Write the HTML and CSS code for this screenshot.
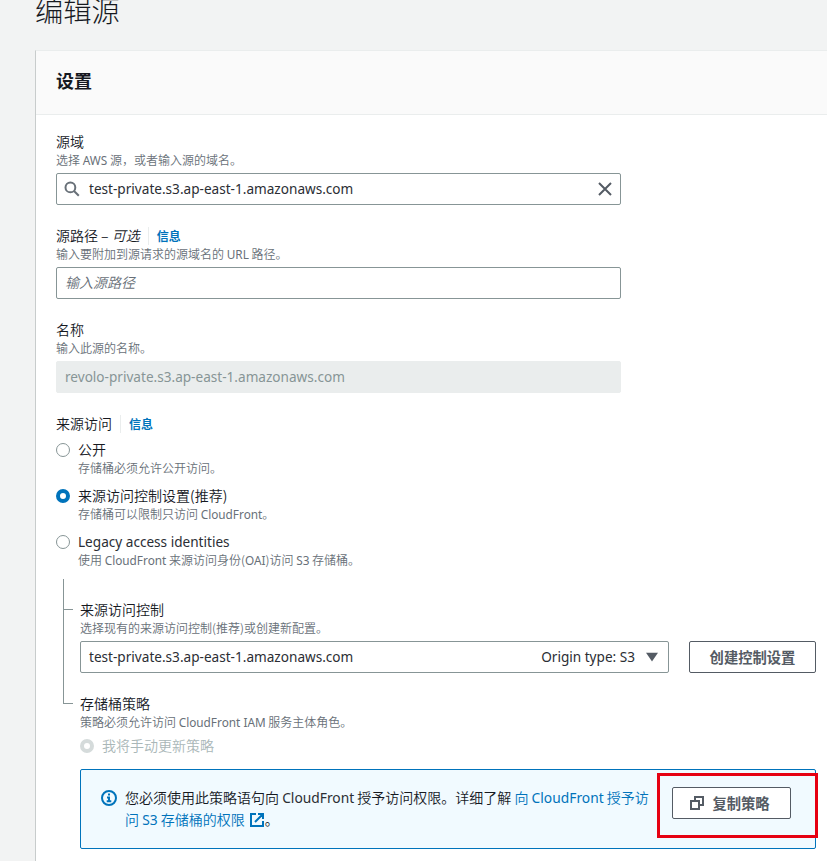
FILE: index.html
```html
<!DOCTYPE html>
<html lang="zh-CN">
<head>
<meta charset="utf-8">
<title>编辑源</title>
<link rel="stylesheet" href="styles.css">
</head>
<body>
<main class="page">
  <h1 class="page-title">编辑源</h1>
  <section class="panel">
    <header class="panel-header"><h2>设置</h2></header>
    <div class="panel-body">
      <div class="field">
        <div class="label">源域</div>
        <div class="hint">选择 <span class="lat">AWS</span> 源，或者输入源的域名。</div>
        <div class="input">
          <svg class="search" width="16" height="16" viewBox="0 0 16 16"><circle cx="6.4" cy="6.4" r="4.9"/><path d="M10 10l4.8 4.8"/></svg>
          <span class="lat">test-private.s3.ap-east-1.amazonaws.com</span>
          <svg class="clear" width="16" height="16" viewBox="0 0 16 16"><path d="M2 2l12 12M14 2L2 14"/></svg>
        </div>
      </div>
      <div class="field">
        <div class="label">源路径 – <em>可选</em><a class="info">信息</a></div>
        <div class="hint">输入要附加到源请求的源域名的 <span class="lat">URL</span> 路径。</div>
        <div class="input placeholder">输入源路径</div>
      </div>
      <div class="field">
        <div class="label">名称</div>
        <div class="hint">输入此源的名称。</div>
        <div class="input disabled"><span class="lat">revolo-private.s3.ap-east-1.amazonaws.com</span></div>
      </div>
      <div class="access">
        <div class="label">来源访问<a class="info">信息</a></div>
        <div class="radios">
          <div class="radio"><i class="dot"></i><div><div class="label">公开</div><div class="hint">存储桶必须允许公开访问。</div></div></div>
          <div class="radio"><i class="dot on"></i><div><div class="label">来源访问控制设置(推荐)</div><div class="hint">存储桶可以限制只访问 <span class="lat">CloudFront</span>。</div></div></div>
          <div class="radio"><i class="dot"></i><div><div class="label"><span class="lat legacy">Legacy access identities</span></div><div class="hint">使用 <span class="lat">CloudFront</span> 来源访问身份(<span class="lat">OAI</span>)访问 <span class="lat">S3</span> 存储桶。</div></div></div>
        </div>
      </div>
      <div class="tree">
        <div class="node">
          <div class="rail"></div>
          <div class="node-body">
            <div class="label">来源访问控制</div>
            <div class="hint">选择现有的来源访问控制(推荐)或创建新配置。</div>
            <div class="control-row">
              <div class="input select"><span class="lat">test-private.s3.ap-east-1.amazonaws.com</span><span class="lat origin">Origin type: S3</span><svg width="12" height="10" viewBox="0 0 12 10"><path d="M0 .7h12L6 9.5z"/></svg></div>
              <button class="button create">创建控制设置</button>
            </div>
          </div>
        </div>
        <div class="node last">
          <div class="rail"></div>
          <div class="node-body">
            <div class="label">存储桶策略</div>
            <div class="hint">策略必须允许访问 <span class="lat">CloudFront IAM</span> 服务主体角色。</div>
            <div class="radio muted"><i class="dot on"></i><div class="label">我将手动更新策略</div></div>
            <div class="alert">
              <svg class="info-icon" width="16" height="16" viewBox="0 0 16 16"><circle cx="8" cy="8" r="7"/><path d="M7 4.5h2M6 7.5h2v4M5.7 11.2h4.6"/></svg>
              <div class="alert-text">
                <div>您必须使用此策略语句向 <span class="lat">CloudFront</span> 授予访问权限。详细了解 <a>向 <span class="lat">CloudFront</span> 授予访</a></div>
                <div><a>问 <span class="lat">S3</span> 存储桶的权限 <svg class="external" width="14" height="14" viewBox="0 0 14 14"><path d="M6 1H1v12h12V8M8 1h5v5M13 1L5 9"/></svg></a><span class="stop">。</span></div>
              </div>
              <button class="button copy"><svg width="14" height="14" viewBox="0 0 14 14"><path d="M1 5h8v8H1zM5 5V1h8v8H9"/></svg><span>复制策略</span></button>
              <div class="highlight"></div>
            </div>
          </div>
        </div>
      </div>
    </div>
  </section>
</main>
</body>
</html>
```
FILE: styles.css
```css
* { box-sizing: border-box; }
body {
  margin: 0;
  height: 861px;
  overflow: hidden;
  background: #f2f3f3;
  color: #16191f;
  font: 350 14px/20px "Noto Sans CJK SC", sans-serif;
}
.page {
  display: flex;
  flex-direction: column;
  height: 861px;
  padding-left: 35px;
}
.page-title {
  flex: none;
  margin: 0;
  height: 50px;
  font-size: 28.3px;
  line-height: 20px;
  font-weight: 300;
}
.panel {
  flex: 1;
  min-height: 0;
  border: 1px solid #eaeded;
  border-left-color: #c8cccc;
  border-right: 0;
  border-bottom: 0;
  background: #fff;
}
.panel-header {
  height: 64px;
  padding: 18px 20px;
  background: #fafafa;
  border-bottom: 1px solid #eaeded;
}
h2 { margin: 0; font-size: 18px; line-height: 22px; font-weight: 700; }
.panel-body { padding: 16px 11px 0 20px; }
.lat { font-family: "Noto Sans", sans-serif; font-size: 13.6px; font-weight: 400; color: #2b2e34; }
.label { height: 22px; white-space: nowrap; }
.hint { height: 16px; line-height: 14px; font-size: 12px; color: #687078; white-space: nowrap; }
.hint .lat { font-size: 11.8px; color: inherit; }
.field { width: 565px; margin-bottom: 20px; }
.input {
  display: flex;
  align-items: center;
  height: 32px;
  margin-top: 4px;
  padding: 0 8px;
  border: 1px solid #879596;
  border-radius: 2px;
  background: #fff;
}
.placeholder { padding-bottom: 2px; font-style: italic; color: #687078; }
.disabled { background: #eaeded; border-color: #eaeded; }
.disabled .lat { color: #879596; }
svg { fill: none; stroke: #545b64; stroke-width: 2; flex: none; }
.search { margin: 0 9px 0 -1px; stroke: #687078; }
.clear { margin-left: auto; margin-right: -1px; }
.info {
  display: inline-block;
  height: 18px;
  margin-left: 8px;
  padding-left: 8px;
  border-left: 1px solid #eaeded;
  line-height: 18px;
  font-size: 12px;
  font-weight: 700;
  color: #0073bb;
}
.radios { display: grid; gap: 8px; margin-top: 4px; }
.radio { display: flex; gap: 8px; }
.dot {
  width: 14px;
  height: 14px;
  margin-top: 4px;
  border: 1px solid #879596;
  border-radius: 50%;
  background: #fff;
}
.dot.on { border: 4px solid #0073bb; }
.tree { margin: 10px 0 0 7px; }
.node { display: grid; grid-template-columns: 17px minmax(0, 1fr); }
.node-body { padding-top: 20px; }
.rail {
  border-left: 1px solid #879596;
  background: linear-gradient(#879596, #879596) 0 30px / 9px 1px no-repeat;
}
.last .rail { height: 31px; }
.control-row { display: flex; gap: 20px; }
.select { width: 589px; }
.origin { margin-left: auto; margin-right: 11px; }
.select svg { fill: #545b64; stroke: none; margin-right: 2px; }
.button {
  display: flex;
  align-items: center;
  justify-content: center;
  height: 32px;
  padding: 0 0 1px;
  border: 1px solid #545b64;
  border-radius: 2px;
  background: #fff;
  color: #545b64;
  font: 700 14.3px/22px "Noto Sans CJK SC", sans-serif;
}
.create { width: 127px; margin-top: 4px; }
.muted { margin-top: 4px; color: #aab7b8; }
.muted .dot.on { border-color: #d5dbdb; }
.alert {
  position: relative;
  display: flex;
  height: 80px;
  margin-top: 12px;
  padding: 17px 24px 0 20px;
  border: 1px solid #0073bb;
  border-radius: 2px;
  background: #f1faff;
}
.info-icon { margin: 3px 8px 0 0; stroke: #0073bb; }
.alert-text { width: 547px; white-space: nowrap; }
.alert-text > div { height: 22px; }
.alert-text .lat { font-size: 13.8px; }
.alert a, .alert a .lat { color: #0073bb; }
.external { margin-left: 2px; stroke: #0073bb; vertical-align: -2px; }
.stop { margin-left: 1px; }
.copy { width: 119px; gap: 8px; padding-right: 3px; }
.highlight {
  position: absolute;
  left: 576px;
  top: 3px;
  width: 161px;
  height: 65px;
  border: 3px solid #e60012;
}
```
